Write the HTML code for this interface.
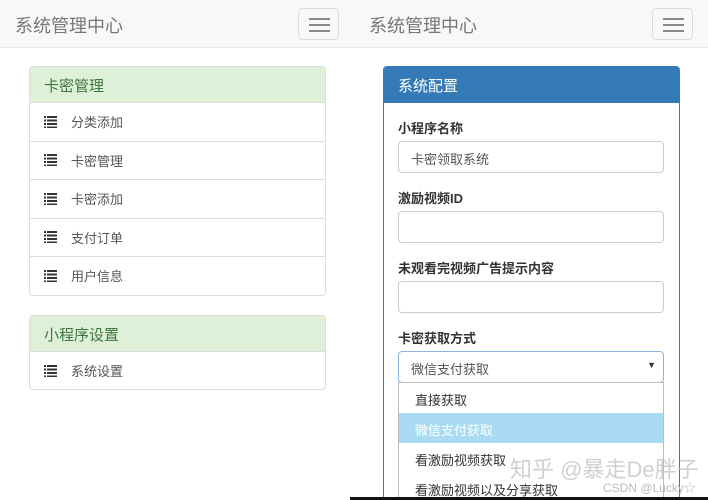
<!DOCTYPE html>
<html style="overflow:hidden;height:500px"><head><meta charset="utf-8"><style>
*{margin:0;padding:0;box-sizing:border-box}
body{width:708px;height:500px;overflow:hidden;background:#fff;font-family:"Liberation Sans","Noto Sans CJK SC",sans-serif;position:relative;color:#333}
.a{position:absolute}
.nav{top:0;height:48px;background:#f8f8f8;border-bottom:1px solid #e7e7e7}
.brand{font-size:18px;color:#777;top:12px}
.btn{top:8px;width:41px;height:32px;border:1px solid #ddd;border-radius:4px;background:#f8f8f8}
.btn i{position:absolute;left:10px;width:21px;height:2px;background:#888}
.panel{border:1px solid #ddd;border-radius:4px;background:#fff}
.ph{height:35px;padding:8px 14px;font-size:15px}
.item{height:38.5px;border-top:1px solid #ddd;padding:0 14px;font-size:13px;color:#555;display:flex;align-items:center}
.ic{width:13px;height:12px;margin-right:14px;display:inline-block;background:repeating-linear-gradient(#333 0 2px,transparent 2px 3.5px);position:relative}
.ic:before{content:"";position:absolute;left:2px;top:0;width:1px;height:12px;background:#fff}
.lbl{font-size:13px;font-weight:bold;left:398px}
.inp{left:398px;width:266px;height:32px;border:1px solid #ccc;border-radius:4px;font-size:13px;color:#555;padding:7px 12px}
.dd div{height:30px;font-size:13px;padding:7px 16px;color:#333}
</style></head><body>
<div class="a nav" style="left:0;width:354px"></div>
<div class="a nav" style="left:354px;width:354px"></div>
<div class="a brand" style="left:15px">系统管理中心</div>
<div class="a brand" style="left:369px">系统管理中心</div>
<div class="a btn" style="left:298px"><i style="top:9px"></i><i style="top:15px"></i><i style="top:21px"></i></div>
<div class="a btn" style="left:652px"><i style="top:9px"></i><i style="top:15px"></i><i style="top:21px"></i></div>

<div class="a panel" style="left:29px;top:66px;width:297px;height:230px;overflow:hidden">
<div class="ph" style="background:#dff0d8;color:#3c763d">卡密管理</div>
<div class="item"><span class="ic"></span>分类添加</div>
<div class="item"><span class="ic"></span>卡密管理</div>
<div class="item"><span class="ic"></span>卡密添加</div>
<div class="item"><span class="ic"></span>支付订单</div>
<div class="item"><span class="ic"></span>用户信息</div>
</div>
<div class="a panel" style="left:29px;top:315px;width:297px;height:75px;overflow:hidden">
<div class="ph" style="background:#dff0d8;color:#3c763d">小程序设置</div>
<div class="item"><span class="ic"></span>系统设置</div>
</div>

<div class="a" style="left:383px;top:66px;width:297px;height:434px;border:1px solid #337ab7;border-bottom:none;border-radius:4px 4px 0 0;overflow:hidden">
<div class="ph" style="background:#337ab7;color:#fff;height:36px">系统配置</div>
</div>
<div class="a lbl" style="top:118px">小程序名称</div>
<div class="a inp" style="top:141px">卡密领取系统</div>
<div class="a lbl" style="top:188px">激励视频ID</div>
<div class="a inp" style="top:211px"></div>
<div class="a lbl" style="top:258px">未观看完视频广告提示内容</div>
<div class="a inp" style="top:281px"></div>
<div class="a lbl" style="top:328px">卡密获取方式</div>
<div class="a inp" style="top:351px;border-color:#8db6dd">微信支付获取<span style="position:absolute;right:7px;top:8px;font-size:9px;color:#333">▼</span></div>
<div class="a dd" style="left:398px;top:382px;width:266px;height:118px;border:1px solid #bbb;border-bottom:none;background:#fff;overflow:hidden">
<div>直接获取</div>
<div style="background:#a9dcf3;color:#fff">微信支付获取</div>
<div>看激励视频获取</div>
<div>看激励视频以及分享获取</div>
</div>
<div class="a" style="left:510px;top:452px;font-size:22px;color:rgba(200,200,200,.85);white-space:nowrap">知乎 @暴走De胖子</div>
<div class="a" style="left:603px;top:479px;font-size:12px;color:rgba(180,180,180,.9);white-space:nowrap">CSDN @Lucky☆</div>
<div class="a" style="left:350px;top:497px;width:358px;height:3px;background:#111"></div>
</body></html>
